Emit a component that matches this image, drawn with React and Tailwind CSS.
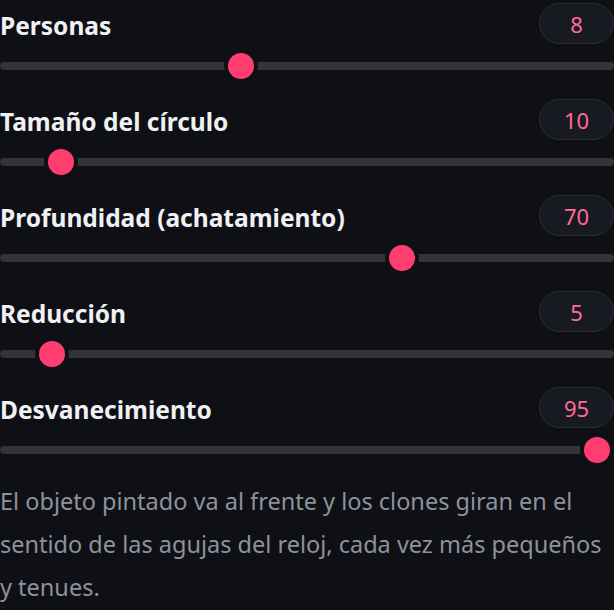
import React from "react";

const rows = [
  { label: "Personas", value: 8, x: 241 },
  { label: "Tamaño del círculo", value: 10, x: 61 },
  { label: "Profundidad (achatamiento)", value: 70, x: 402 },
  { label: "Reducción", value: 5, x: 52 },
  { label: "Desvanecimiento", value: 95, x: 597 },
];

function Row({ label, value, x }) {
  return (
    <div className="flex flex-col">
      <div className="flex h-[41px] items-center justify-between">
        <span className="pt-[6px] text-[24.5px] font-bold leading-none text-[#f0f1f3]">{label}</span>
        <span className="flex h-[41px] w-[75px] items-center justify-center rounded-full border border-[#2a2d34] bg-[#181a21] text-[22px] leading-none text-[#ff6b98]">
          {value}
        </span>
      </div>
      <div className="relative mt-[18px] h-[8px] w-full rounded-full bg-[#333439]">
        <div
          className="absolute top-1/2 h-[26px] w-[26px] -translate-x-1/2 -translate-y-1/2 rounded-full bg-[#ff3d6e] shadow-[0_0_0_4px_#0f1015]"
          style={{ left: `${x}px` }}
        />
      </div>
    </div>
  );
}

export default function App() {
  return (
    <div
      className="h-[610px] w-[614px] overflow-hidden bg-[#0f1015] pt-[3px]"
      style={{ fontFamily: '"Noto Sans", "Open Sans", sans-serif' }}
    >
      <div className="flex flex-col gap-[29px]">
        {rows.map((r) => (
          <Row key={r.label} {...r} />
        ))}
      </div>
      <p className="mt-[26px] text-[23.5px] leading-[43px] text-[#8e929c]">
        El objeto pintado va al frente y los clones giran en el sentido de las agujas del reloj, cada vez más pequeños y tenues.
      </p>
    </div>
  );
}
